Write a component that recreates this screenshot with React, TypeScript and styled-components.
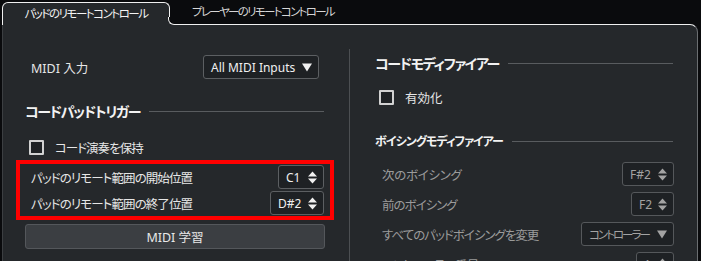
import React from "react";
import styled, { createGlobalStyle } from "styled-components";

const PANEL = "#25282b";
const BLACK = "#0a0b0d";
const EDGE = "#f0f0f0";

const Global = createGlobalStyle`
  html, body { margin: 0; padding: 0; background: ${BLACK}; }
  body { font-family: "Noto Sans", "Noto Sans CJK JP", sans-serif; }
  * { box-sizing: border-box; }
`;

const Frame = styled.div`
  width: 701px;
  height: 261px;
  overflow: hidden;
  background: ${BLACK};
  display: flex;
  flex-direction: column;
  font-feature-settings: "palt" 1;
`;

const TabBar = styled.div`
  flex: none;
  display: flex;
  align-items: flex-end;
  height: 24px;
  padding-left: 2px;
`;

const ActiveTab = styled.div`
  position: relative;
  z-index: 1;
  width: 168px;
  height: 23px;
  margin-bottom: -1px;
  padding-bottom: 2px;
  background: ${PANEL};
  border: 1px solid ${EDGE};
  border-bottom: none;
  border-radius: 6px 6px 0 0;
  display: flex;
  align-items: center;
  justify-content: center;
  color: #f4f4f4;
  font-size: 11.5px;
  letter-spacing: -1.5px;
  &::before {
    content: "";
    position: absolute;
    right: -7px;
    bottom: 0;
    width: 7px;
    height: 7px;
    background: ${PANEL};
  }
  &::after {
    content: "";
    position: absolute;
    right: -7px;
    bottom: 0;
    width: 7px;
    height: 7px;
    background: ${BLACK};
    border-left: 1px solid ${EDGE};
    border-bottom: 1px solid ${EDGE};
    border-bottom-left-radius: 6px;
  }
`;

const Tab = styled.div`
  height: 24px;
  padding: 0 0 3px 22px;
  display: flex;
  align-items: center;
  color: #d6d6d6;
  font-size: 11.5px;
  letter-spacing: -1.7px;
`;

const Panel = styled.div`
  flex: 1;
  width: 696px;
  margin-left: 2px;
  background: ${PANEL};
  border-top: 1px solid ${EDGE};
  border-right: 1px solid #6b6e71;
  border-left: 1px solid #3c3f42;
  border-top-right-radius: 8px;
  display: grid;
  grid-template-columns: 346px 1px 1fr;
  color: #e4e4e4;
  font-size: 12.5px;
`;

const Divider = styled.div`
  margin-top: 24px;
  background: #4c4f52;
`;

const LeftCol = styled.div`
  display: flex;
  flex-direction: column;
  padding: 30px 24px 0 22px;
`;

const RightCol = styled.div`
  display: flex;
  flex-direction: column;
  padding: 28px 23px 0 25px;
`;

const Row = styled.div<{ $h?: number; $mt?: number; $pl?: number; $dim?: boolean }>`
  display: flex;
  align-items: center;
  justify-content: space-between;
  flex: none;
  height: ${(p) => p.$h ?? 24}px;
  margin-top: ${(p) => p.$mt ?? 0}px;
  padding-left: ${(p) => p.$pl ?? 0}px;
  color: ${(p) => (p.$dim ? "#9b9b9b" : "#e6e6e6")};
  white-space: nowrap;
`;

const Label = styled.span<{ $ls?: number; $fs?: number }>`
  letter-spacing: ${(p) => p.$ls ?? -1}px;
  ${(p) => (p.$fs ? `font-size: ${p.$fs}px;` : "")}
`;

const Header = styled.div<{ $mt: number; $small?: boolean }>`
  display: flex;
  align-items: center;
  gap: 9px;
  flex: none;
  height: 20px;
  margin-top: ${(p) => p.$mt}px;
  font-size: ${(p) => (p.$small ? 12 : 14)}px;
  letter-spacing: ${(p) => (p.$small ? -1 : -1.3)}px;
  font-weight: 700;
  color: #f2f2f2;
  white-space: nowrap;
  &::after {
    content: "";
    flex: 1;
    height: 1px;
    margin-right: 1px;
    background: #595c5f;
  }
`;

const CheckRow = styled.label<{ $mt: number; $pl: number }>`
  display: flex;
  align-items: center;
  gap: 11px;
  flex: none;
  height: 20px;
  margin-top: ${(p) => p.$mt}px;
  padding-left: ${(p) => p.$pl}px;
  color: #e6e6e6;
`;

const Box = styled.span`
  width: 15px;
  height: 15px;
  border: 2px solid #d2d2d2;
  border-radius: 1px;
  background: #1f2225;
`;

const Field = styled.div<{ $w: number; $dim?: boolean; $mr?: number }>`
  width: ${(p) => p.$w}px;
  height: 24px;
  margin-right: ${(p) => p.$mr ?? 0}px;
  flex: none;
  display: flex;
  align-items: center;
  justify-content: space-between;
  padding: 0 6px 0 7px;
  border: 1px solid ${(p) => (p.$dim ? "#55585b" : "#5c5f62")};
  border-radius: 3px;
  background: #1e2124;
  color: ${(p) => (p.$dim ? "#a3a3a3" : "#f0f0f0")};
  font-size: 12px;
  white-space: nowrap;
`;

const Highlight = styled.div`
  flex: none;
  margin: 3px -9px 0 -9px;
  border: 4px solid #ff0000;
  padding: 0 6px 0 11px;
  display: flex;
  flex-direction: column;
`;

const LearnButton = styled.button`
  flex: none;
  height: 25px;
  margin-top: 4px;
  border: 1px solid #54575b;
  border-radius: 3px;
  background: #3b3e42;
  color: #e8e8e8;
  font: inherit;
  font-size: 12.5px;
  padding: 0 0 1px;
`;

const Spin = ({ dim }: { dim?: boolean }) => (
  <svg width="9" height="13" viewBox="0 0 9 13">
    <path d="M0 5.5 L4.5 0.5 L9 5.5 Z M0 7.5 L4.5 12.5 L9 7.5 Z" fill={dim ? "#a3a3a3" : "#f0f0f0"} />
  </svg>
);

const Down = ({ dim }: { dim?: boolean }) => (
  <svg width="10" height="9" viewBox="0 0 10 9">
    <path d="M0 0.5 L10 0.5 L5 8.5 Z" fill={dim ? "#a3a3a3" : "#f0f0f0"} />
  </svg>
);

export default function App() {
  return (
    <>
      <Global />
      <Frame>
        <TabBar>
          <ActiveTab>パッドのリモートコントロール</ActiveTab>
          <Tab>プレーヤーのリモートコントロール</Tab>
        </TabBar>
        <Panel>
          <LeftCol>
            <Row $pl={6}>
              <Label $ls={0}>MIDI 入力</Label>
              <Field $w={116} $mr={6}>
                <span>All MIDI Inputs</span>
                <Down />
              </Field>
            </Row>
            <Header $mt={22}>コードパッドトリガー</Header>
            <CheckRow $mt={16} $pl={4}>
              <Box />
              <Label>コード演奏を保持</Label>
            </CheckRow>
            <Highlight>
              <Row $h={26}>
                <Label $ls={-0.9}>パッドのリモート範囲の開始位置</Label>
                <Field $w={46}>
                  <span>C1</span>
                  <Spin />
                </Field>
              </Row>
              <Row $h={26}>
                <Label $ls={-0.9}>パッドのリモート範囲の終了位置</Label>
                <Field $w={54}>
                  <span>D#2</span>
                  <Spin />
                </Field>
              </Row>
            </Highlight>
            <LearnButton>MIDI 学習</LearnButton>
          </LeftCol>
          <Divider />
          <RightCol>
            <Header $mt={0}>コードモディファイアー</Header>
            <CheckRow $mt={14} $pl={4}>
              <Box />
              <Label $ls={0}>有効化</Label>
            </CheckRow>
            <Header $mt={24} $small>ボイシングモディファイアー</Header>
            <Row $mt={11} $pl={7} $dim>
              <Label $ls={-0.3}>次のボイシング</Label>
              <Field $w={52} $dim>
                <span>F#2</span>
                <Spin dim />
              </Field>
            </Row>
            <Row $mt={6} $pl={7} $dim>
              <Label>前のボイシング</Label>
              <Field $w={43} $dim>
                <span>F2</span>
                <Spin dim />
              </Field>
            </Row>
            <Row $mt={6} $pl={7} $dim>
              <Label>すべてのパッドボイシングを変更</Label>
              <Field $w={93} $dim>
                <Label $ls={-2} $fs={11.5}>コントローラー</Label>
                <Down dim />
              </Field>
            </Row>
            <Row $mt={6} $pl={7} $dim>
              <Label>コントローラー番号</Label>
              <Field $w={38} $dim>
                <span>1</span>
                <Spin dim />
              </Field>
            </Row>
          </RightCol>
        </Panel>
      </Frame>
    </>
  );
}
